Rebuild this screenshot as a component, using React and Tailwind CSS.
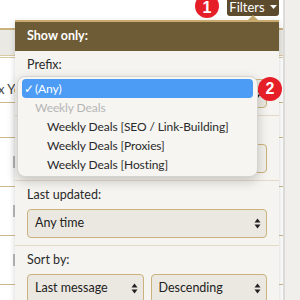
import React from "react";

const Arrows = () => (
  <svg width="7" height="11" viewBox="0 0 7 11" className="shrink-0">
    <path d="M3.5 0.5 L6.5 4.5 L0.5 4.5 Z" fill="#222" />
    <path d="M3.5 10.5 L6.5 6.5 L0.5 6.5 Z" fill="#222" />
  </svg>
);

const Select = ({ children, className = "" }) => (
  <div
    className={
      "h-[29px] rounded-[4px] border border-[#cbb27c] bg-[#ebe8e1] flex items-center justify-between pl-[7px] pr-[5px] text-[12.5px] text-[#222] " +
      className
    }
  >
    <span>{children}</span>
    <Arrows />
  </div>
);

const Label = ({ children }) => (
  <div className="h-[20px] leading-[20px] text-[12.5px] text-[#2a2a2a]">{children}</div>
);

export default function App() {
  return (
    <div
      className="relative w-[300px] h-[300px] overflow-hidden bg-white"
      style={{ fontFamily: "Lato, 'Open Sans', sans-serif" }}
    >
      {/* background page */}
      <div className="flex h-full">
        <div className="w-[283px] flex flex-col">
          <div className="h-[30px] shrink-0 border-b-2 border-[#c9b27d]" />
          <div className="h-[26px] shrink-0 bg-[#ebe9e4] border-b border-[#d9c9a3]" />
          <div className="h-[2px] shrink-0 border-b border-[#d9c9a3]" />
          <div className="h-[45px] shrink-0 border-b border-[#cdb98c] flex items-end pb-[4px]">
            <span className="text-[13px] text-[#444] ml-[-2px] leading-[18px] whitespace-nowrap">x Yo</span>
          </div>
          <div className="h-[35px] shrink-0 border-b border-[#cdb98c]" />
          <div className="h-[49px] shrink-0 border-b border-[#cdb98c] flex items-center pl-[13px]">
            <div className="w-[2px] h-[12px] bg-[#bbb]" />
          </div>
          <div className="h-[49px] shrink-0 border-b border-[#cdb98c] flex items-center pl-[13px]">
            <div className="w-[2px] h-[12px] bg-[#bbb]" />
          </div>
          <div className="h-[49px] shrink-0 border-b border-[#cdb98c] flex items-center pl-[13px]">
            <div className="w-[2px] h-[12px] bg-[#bbb]" />
          </div>
        </div>
        <div className="w-[2px] bg-[#dcdcda]" />
        <div className="flex-1 bg-[#f0efec]" />
      </div>

      {/* Filters button */}
      <div className="absolute left-[227px] top-0 w-[52px] h-[16px] rounded-b-[3px] bg-[#5d4b2d] flex items-center justify-center gap-[5px] text-white text-[13px] leading-none pb-[2px]">
        <span>Filters</span>
        <svg width="7" height="4" viewBox="0 0 7 4">
          <path d="M0 0 L7 0 L3.5 4 Z" fill="#fff" />
        </svg>
      </div>

      {/* Filters popup */}
      <div className="absolute left-[15px] top-[15px] w-[264px]">
        <div className="ml-[233px] w-0 h-0 border-l-[5px] border-r-[5px] border-b-[5px] border-l-transparent border-r-transparent border-b-[#c8aa6e]" />
        <div className="border-t-2 border-[#c8aa6e] bg-[#f5f4f0] shadow-[0_2px_6px_rgba(0,0,0,0.18)]">
          <div className="h-[29px] bg-[#6e5c36] px-3 flex items-center text-white font-bold text-[12.5px]">
            Show only:
          </div>
          <div className="pt-[4px] px-3 pb-[7px] border-b border-[#e3dac6]">
            <Label>Prefix:</Label>
            <Select className="mt-[4px]">{""}</Select>
          </div>
          <div className="pt-[4px] px-3 pb-[7px] border-b border-[#e3dac6]">
            <div className="h-[20px]" />
            <div className="mt-[4px] h-[29px] rounded-[4px] border border-[#cbb27c] bg-[#f2f0eb]" />
          </div>
          <div className="pt-[4px] px-3 pb-[7px] border-b border-[#e3dac6]">
            <Label>Last updated:</Label>
            <Select className="mt-[4px]">Any time</Select>
          </div>
          <div className="pt-[4px] px-3 pb-[7px]">
            <Label>Sort by:</Label>
            <div className="mt-[4px] grid grid-cols-2 gap-[7px]">
              <Select>Last message</Select>
              <Select>Descending</Select>
            </div>
          </div>
        </div>
      </div>

      {/* native dropdown menu */}
      <div
        className="absolute left-[17px] top-[76px] w-[241px] rounded-[8px] bg-[#f6f5f2] border border-[#d6d4d0] shadow-[0_4px_12px_rgba(0,0,0,0.2)] py-[2px] px-[4px] text-[12px] tracking-[-0.1px] leading-none whitespace-nowrap"
        style={{ fontFamily: "Lato, 'Open Sans', sans-serif" }}
      >
        <div className="h-[19px] rounded-[4px] bg-[#4c9cf6] text-white flex items-center pl-[2px]">
          <span className="w-[11px] text-[12px]">✓</span>
          <span>(Any)</span>
        </div>
        <div className="h-[19px] flex items-center pl-[13px] text-[#b5b5b5]">Weekly Deals</div>
        <div className="h-[19px] flex items-center pl-[25px] text-[#2a2a2a]">Weekly Deals [SEO / Link-Building]</div>
        <div className="h-[19px] flex items-center pl-[25px] text-[#2a2a2a]">Weekly Deals [Proxies]</div>
        <div className="h-[19px] flex items-center pl-[25px] text-[#2a2a2a]">Weekly Deals [Hosting]</div>
      </div>

      {/* badges */}
      <div className="absolute left-[195px] top-[-6px] w-[24px] h-[24px] rounded-full bg-[#e61e28] text-white font-bold text-[16px] flex items-center justify-center" style={{ fontFamily: "'Liberation Sans', Arial, sans-serif" }}>
        <span className="mt-[3px]">1</span>
      </div>
      <div className="absolute left-[258px] top-[77px] w-[24px] h-[24px] rounded-full bg-[#e61e28] text-white font-bold text-[16px] flex items-center justify-center" style={{ fontFamily: "'Liberation Sans', Arial, sans-serif" }}>
        2
      </div>
    </div>
  );
}
